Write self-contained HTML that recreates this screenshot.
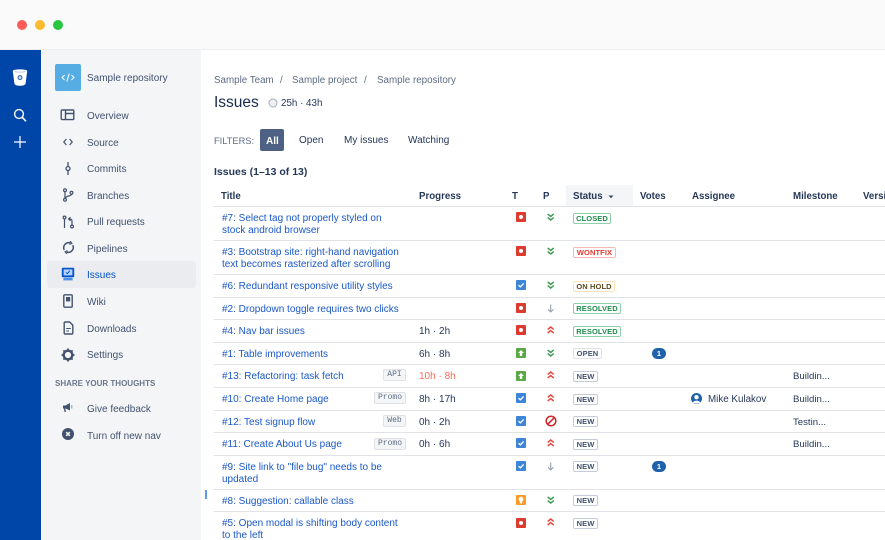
<!DOCTYPE html>
<html><head><meta charset="utf-8">
<style>
html,body{margin:0;padding:0;background:#fff}
#p{position:relative;width:885px;height:540px;overflow:hidden;background:#fff;font-family:"Liberation Sans",sans-serif;font-size:10px;color:#172b4d;filter:blur(.35px)}
#p div,#p svg{position:absolute}
.t{white-space:nowrap;line-height:12px}
.n{color:#42526e;left:87px;font-size:10px}
.h{font-weight:bold;color:#253858;top:191px;font-size:9.7px}
.l{color:#1a58c8;left:222px;font-size:10px}
.r{left:214px;width:671px;height:1px;background:#e0e2e6}
.b{font-size:7.5px;font-weight:bold;height:11px;line-height:9px;box-sizing:border-box;text-align:center;border:1px solid;border-radius:2px;white-space:nowrap;letter-spacing:.1px;left:573px}
.new{color:#42526e;border-color:#c5ccd9;width:25px}
.g{color:#1f8a4d;border-color:#8fcfa8}
.lb{font-family:"Liberation Mono",monospace;font-size:8px;color:#5e6c84;background:#f4f5f7;border:1px solid #dfe1e6;border-radius:2px;height:12px;line-height:10px;box-sizing:border-box;text-align:center;white-space:nowrap}
.s{left:374px;width:32px}
.w{left:383px;width:23px}
.d{color:#253858;font-size:10px}
.m{color:#253858;font-size:9.6px;left:793px}
.v{left:652px;width:14px;height:11px;border-radius:5.5px;background:#1f62ab;color:#fff;font-size:7.5px;font-weight:bold;line-height:11px;text-align:center}
.c{color:#5e6c84;font-size:9.8px;top:75px}
</style></head><body>
<div id="p">
<!-- title bar -->
<div style="left:0;top:0;width:885px;height:49px;background:#fafafa"></div>
<div style="left:0;top:49px;width:885px;height:1px;background:#eeeeee"></div>
<div style="left:17px;top:20px;width:10px;height:10px;border-radius:50%;background:#fc5b57"></div>
<div style="left:35px;top:20px;width:10px;height:10px;border-radius:50%;background:#fdbc2e"></div>
<div style="left:53px;top:20px;width:10px;height:10px;border-radius:50%;background:#26c73f"></div>
<!-- global nav -->
<div style="left:0;top:50px;width:41px;height:490px;background:#0046a8"></div>
<svg style="left:12px;top:68px" width="16" height="19" viewBox="0 0 16 19"><path d="M.8 3C.8 .8 15.2 .8 15.2 3L13.6 15.5C13.3 18.6 2.7 18.6 2.4 15.5Z" fill="#fff"/><path d="M2.6 3.4C5 4.4 11 4.4 13.4 3.4" stroke="#b8cbe8" stroke-width="1" fill="none"/><circle cx="8" cy="9.6" r="1.9" fill="#dfe8f5" stroke="#2e66b5" stroke-width="1.1"/></svg>
<svg style="left:13px;top:108px" width="14" height="14" viewBox="0 0 14 14"><circle cx="6" cy="6" r="4.4" fill="none" stroke="#fff" stroke-width="1.4"/><path d="M9.3 9.4L13 13.2" stroke="#fff" stroke-width="1.6"/></svg>
<svg style="left:14px;top:136px" width="12" height="12" viewBox="0 0 12 12"><path d="M6 0V12M0 6H12" stroke="#fff" stroke-width="1.2"/></svg>
<!-- sidebar -->
<div style="left:41px;top:50px;width:1px;height:490px;background:#fff"></div>
<div style="left:42px;top:50px;width:159px;height:490px;background:#f4f5f7"></div>
<div style="left:47px;top:261px;width:149px;height:27px;background:#ebecf0;border-radius:3px"></div>
<div style="left:55px;top:64px;width:26px;height:27px;background:#56ade4;border-radius:2px"></div>
<svg style="left:61px;top:71px" width="14" height="13" viewBox="0 0 14 13" fill="none" stroke="#fff" stroke-width="1"><path d="M3.6 4L1 6.5L3.6 9M10.4 4L13 6.5L10.4 9M8.2 2.5L5.8 10.5"/></svg>
<div class="t n" style="top:73px">Sample repository</div>
<div class="t n" style="top:111px">Overview</div>
<div class="t n" style="top:138px">Source</div>
<div class="t n" style="top:164px">Commits</div>
<div class="t n" style="top:191px">Branches</div>
<div class="t n" style="top:217px">Pull requests</div>
<div class="t n" style="top:244px">Pipelines</div>
<div class="t n" style="top:270px;color:#0052cc">Issues</div>
<div class="t n" style="top:297px">Wiki</div>
<div class="t n" style="top:324px">Downloads</div>
<div class="t n" style="top:350px">Settings</div>
<div class="t" style="left:55px;top:378px;color:#6b778c;font-size:8px;font-weight:bold">SHARE YOUR THOUGHTS</div>
<div class="t n" style="top:404px">Give feedback</div>
<div class="t n" style="top:431px">Turn off new nav</div>
<!-- sidebar icons -->
<svg style="left:60px;top:108px" width="15" height="14" viewBox="0 0 15 14" fill="none" stroke="#42526e" stroke-width="1.4"><rect x="1.2" y="2" width="12.6" height="9.6" rx="1"/><path d="M5.5 2V11.6M5.5 5.5H13.8"/></svg>
<svg style="left:63px;top:137px" width="10" height="10" viewBox="0 0 10 10" fill="none" stroke="#42526e" stroke-width="1.2"><path d="M3.4 2L.8 5L3.4 8M6.6 2L9.2 5L6.6 8"/></svg>
<svg style="left:64px;top:161px" width="8" height="15" viewBox="0 0 8 15" fill="none" stroke="#42526e" stroke-width="1.3"><circle cx="4" cy="7.5" r="2"/><path d="M4 1V5.5M4 9.5V14"/></svg>
<svg style="left:62px;top:188px" width="12" height="14" viewBox="0 0 12 14" fill="none" stroke="#42526e" stroke-width="1.2"><circle cx="3" cy="2.2" r="1.4"/><circle cx="3" cy="11.8" r="1.4"/><circle cx="9.5" cy="4.8" r="1.4"/><path d="M3 3.6V10.4M9.5 6.2C9.5 8.5 3.5 7.5 3.2 10.4"/></svg>
<svg style="left:62px;top:215px" width="13" height="14" viewBox="0 0 13 14" fill="none" stroke="#42526e" stroke-width="1.2"><circle cx="2.5" cy="2.5" r="1.4"/><path d="M2.5 4V13"/><circle cx="10" cy="11.5" r="1.4"/><path d="M10 10V6C10 4.5 9 4 7 4M8.5 2.2L6.6 4L8.5 5.8"/></svg>
<svg style="left:62px;top:241px" width="13" height="13" viewBox="0 0 13 13" fill="none" stroke="#42526e" stroke-width="1.5"><path d="M2.2 8.8A5 5 0 0 1 8.5 2M10.8 4.2A5 5 0 0 1 4.5 11"/><path d="M8 0L10 2.2L7.5 3.5M5 13L3 10.8L5.5 9.5" stroke-width="1"/></svg>
<svg style="left:61px;top:267px" width="14" height="14" viewBox="0 0 14 14"><rect x=".8" y=".8" width="12.4" height="9.4" rx="1" fill="#0052cc"/><rect x="2.6" y="2.4" width="8.8" height="6" fill="#b8d2f5"/><path d="M5 5.5L6.4 6.6L8.8 3.8" stroke="#0052cc" stroke-width="1" fill="none"/><rect x="2.4" y="10.8" width="9.2" height="2.6" fill="#4c8fe8"/></svg>
<svg style="left:63px;top:294px" width="10" height="14" viewBox="0 0 10 14" fill="none"><rect x=".8" y=".8" width="8.4" height="12.4" rx="1" stroke="#42526e" stroke-width="1.4"/><rect x="3" y="3" width="4.2" height="4.4" fill="#42526e"/></svg>
<svg style="left:63px;top:321px" width="11" height="14" viewBox="0 0 11 14" fill="none" stroke="#42526e" stroke-width="1.4"><path d="M1.2 2C1.2 1.3 1.6 1 2.2 1H6.6L9.8 4.2V12C9.8 12.6 9.4 13 8.8 13H2.2C1.6 13 1.2 12.6 1.2 12Z"/><path d="M3.2 7.5H7.8M3.2 10H6" stroke-width="1"/></svg>
<svg style="left:61px;top:348px" width="14" height="14" viewBox="0 0 14 14"><circle cx="7" cy="7" r="4.3" fill="none" stroke="#42526e" stroke-width="2.4"/><path d="M7 .5V2.5M7 11.5V13.5M.5 7H2.5M11.5 7H13.5M2.4 2.4L3.8 3.8M10.2 10.2L11.6 11.6M11.6 2.4L10.2 3.8M3.8 10.2L2.4 11.6" stroke="#42526e" stroke-width="1.8"/></svg>
<svg style="left:62px;top:402px" width="12" height="11" viewBox="0 0 12 11"><path d="M1 3.5H3.5L8 1V8.5L3.5 6.5H3.2L4 10H2.6L1.8 6.5H1Z" fill="#42526e"/><path d="M9.8 3V6.5" stroke="#8993a4" stroke-width="1"/></svg>
<svg style="left:62px;top:428px" width="12" height="12" viewBox="0 0 12 12"><circle cx="6" cy="6" r="6" fill="#42526e"/><path d="M4.2 4.2L7.8 7.8M7.8 4.2L4.2 7.8" stroke="#f4f5f7" stroke-width="1.5"/></svg>
<div style="left:205px;top:490px;width:2px;height:9px;background:#5a9bee"></div>
<!-- header -->
<div class="t c" style="left:214px">Sample Team</div>
<div class="t c" style="left:280px">/</div>
<div class="t c" style="left:292px">Sample project</div>
<div class="t c" style="left:364px">/</div>
<div class="t c" style="left:377px">Sample repository</div>
<div class="t" style="left:214px;top:94px;font-size:15.5px;line-height:18px;color:#172b4d">Issues</div>
<svg style="left:268px;top:98px" width="10" height="10" viewBox="0 0 10 10"><circle cx="5" cy="5" r="4" fill="#f0f0f0" stroke="#a5adba" stroke-width="1"/></svg>
<div class="t" style="left:281px;top:98px;font-size:9.8px;color:#253858">25h · 43h</div>
<div class="t" style="left:214px;top:135px;color:#5e6c84;font-size:9.3px">FILTERS:</div>
<div style="left:260px;top:129px;width:24px;height:22px;background:#4d6185;border-radius:2px"></div>
<div class="t" style="left:266px;top:136px;color:#fff;font-weight:bold;font-size:10px">All</div>
<div class="t d" style="left:299px;top:135px">Open</div>
<div class="t d" style="left:344px;top:135px">My issues</div>
<div class="t d" style="left:408px;top:135px">Watching</div>
<div class="t" style="left:214px;top:166px;font-weight:bold;font-size:10.5px;color:#253858">Issues (1–13 of 13)</div>
<!-- table header -->
<div style="left:566px;top:185px;width:67px;height:21px;background:#f4f5f7"></div>
<div class="t h" style="left:221px">Title</div>
<div class="t h" style="left:419px">Progress</div>
<div class="t h" style="left:512px">T</div>
<div class="t h" style="left:543px">P</div>
<div class="t h" style="left:573px">Status</div>
<svg style="left:608px;top:195px" width="6" height="4" viewBox="0 0 6 4"><path d="M.5 .5H5.5L3 3.2Z" fill="#344563"/></svg>
<div class="t h" style="left:640px">Votes</div>
<div class="t h" style="left:692px">Assignee</div>
<div class="t h" style="left:793px">Milestone</div>
<div class="t h" style="left:863px">Versi</div>
<div class="r" style="top:206px"></div><div class="r" style="top:240px"></div><div class="r" style="top:274px"></div><div class="r" style="top:297px"></div><div class="r" style="top:319px"></div><div class="r" style="top:342px"></div><div class="r" style="top:364px"></div><div class="r" style="top:387px"></div><div class="r" style="top:410px"></div><div class="r" style="top:432px"></div><div class="r" style="top:455px"></div><div class="r" style="top:489px"></div><div class="r" style="top:511px"></div>
<!-- titles -->
<div class="t l" style="top:213px">#7: Select tag not properly styled on</div>
<div class="t l" style="top:225px">stock android browser</div>
<div class="t l" style="top:247px">#3: Bootstrap site: right-hand navigation</div>
<div class="t l" style="top:259px">text becomes rasterized after scrolling</div>
<div class="t l" style="top:281px">#6: Redundant responsive utility styles</div>
<div class="t l" style="top:304px">#2: Dropdown toggle requires two clicks</div>
<div class="t l" style="top:326px">#4: Nav bar issues</div>
<div class="t l" style="top:349px">#1: Table improvements</div>
<div class="t l" style="top:371px">#13: Refactoring: task fetch</div>
<div class="t l" style="top:394px">#10: Create Home page</div>
<div class="t l" style="top:417px">#12: Test signup flow</div>
<div class="t l" style="top:439px">#11: Create About Us page</div>
<div class="t l" style="top:462px">#9: Site link to "file bug" needs to be</div>
<div class="t l" style="top:474px">updated</div>
<div class="t l" style="top:496px">#8: Suggestion: callable class</div>
<div class="t l" style="top:518px">#5: Open modal is shifting body content</div>
<div class="t l" style="top:530px">to the left</div>
<!-- labels -->
<div class="lb w" style="top:369px">API</div>
<div class="lb s" style="top:392px">Promo</div>
<div class="lb w" style="top:415px">Web</div>
<div class="lb s" style="top:438px">Promo</div>
<!-- progress -->
<div class="t d" style="left:419px;top:326px">1h · 2h</div>
<div class="t d" style="left:419px;top:349px">6h · 8h</div>
<div class="t d" style="left:419px;top:371px;color:#ff6a5c">10h · 8h</div>
<div class="t d" style="left:419px;top:394px">8h · 17h</div>
<div class="t d" style="left:419px;top:417px">0h · 2h</div>
<div class="t d" style="left:419px;top:439px">0h · 6h</div>
<!-- type icons -->
<svg width="0" height="0" style="left:0;top:0"><defs>
<g id="bug"><rect width="10" height="10" rx="1" fill="#dd3b30"/><circle cx="5" cy="5" r="2" fill="#fff"/></g>
<g id="task"><rect width="10" height="10" rx="1" fill="#3d85d8"/><path d="M2.5 5.2L4.4 6.8L7.6 3.4" stroke="#fff" stroke-width="1.3" fill="none"/></g>
<g id="up"><rect width="10" height="10" rx="1" fill="#5aa845"/><path d="M5 2L8 5H6.2V8H3.8V5H2Z" fill="#fff"/></g>
<g id="idea"><rect width="10" height="10" rx="1" fill="#fb9a28"/><circle cx="5" cy="4.2" r="2.4" fill="#fff"/><rect x="3.8" y="6.4" width="2.4" height="2" fill="#fff"/></g>
<g id="low" fill="none" stroke="#3f9a54" stroke-width="1.5"><path d="M.7 1L3.7 3.4L6.7 1M.7 4.6L3.7 7L6.7 4.6"/></g>
<g id="high" fill="none" stroke="#e5483f" stroke-width="1.5"><path d="M.7 7L3.7 4.6L6.7 7M.7 3.4L3.7 1L6.7 3.4"/></g>
<g id="down" fill="none" stroke="#97a0af" stroke-width="1.1"><path d="M3.7 .5V8M1 5.3L3.7 8L6.4 5.3"/></g>
</defs></svg>
<svg style="left:516px;top:212px" width="10" height="10"><use href="#bug"/></svg>
<svg style="left:516px;top:246px" width="10" height="10"><use href="#bug"/></svg>
<svg style="left:516px;top:280px" width="10" height="10"><use href="#task"/></svg>
<svg style="left:516px;top:303px" width="10" height="10"><use href="#bug"/></svg>
<svg style="left:516px;top:325px" width="10" height="10"><use href="#bug"/></svg>
<svg style="left:516px;top:348px" width="10" height="10"><use href="#up"/></svg>
<svg style="left:516px;top:371px" width="10" height="10"><use href="#up"/></svg>
<svg style="left:516px;top:393px" width="10" height="10"><use href="#task"/></svg>
<svg style="left:516px;top:416px" width="10" height="10"><use href="#task"/></svg>
<svg style="left:516px;top:438px" width="10" height="10"><use href="#task"/></svg>
<svg style="left:516px;top:461px" width="10" height="10"><use href="#task"/></svg>
<svg style="left:516px;top:495px" width="10" height="10"><use href="#idea"/></svg>
<svg style="left:516px;top:518px" width="10" height="10"><use href="#bug"/></svg>
<!-- priority -->
<svg style="left:547px;top:213px" width="8" height="9"><use href="#low"/></svg>
<svg style="left:547px;top:247px" width="8" height="9"><use href="#low"/></svg>
<svg style="left:547px;top:281px" width="8" height="9"><use href="#low"/></svg>
<svg style="left:547px;top:304px" width="8" height="9"><use href="#down"/></svg>
<svg style="left:547px;top:326px" width="8" height="9"><use href="#high"/></svg>
<svg style="left:547px;top:349px" width="8" height="9"><use href="#low"/></svg>
<svg style="left:547px;top:371px" width="8" height="9"><use href="#high"/></svg>
<svg style="left:547px;top:394px" width="8" height="9"><use href="#high"/></svg>
<svg style="left:545px;top:415px" width="12" height="12" viewBox="0 0 12 12" fill="none" stroke="#d3232a" stroke-width="1.5"><circle cx="6" cy="6" r="4.8"/><path d="M2.7 9.3L9.3 2.7"/></svg>
<svg style="left:547px;top:439px" width="8" height="9"><use href="#high"/></svg>
<svg style="left:547px;top:462px" width="8" height="9"><use href="#down"/></svg>
<svg style="left:547px;top:496px" width="8" height="9"><use href="#low"/></svg>
<svg style="left:547px;top:518px" width="8" height="9"><use href="#high"/></svg>
<!-- status -->
<div class="b g" style="top:213px;width:38px">CLOSED</div>
<div class="b" style="top:247px;width:43px;color:#de3a33;border-color:#f5b8b3">WONTFIX</div>
<div class="b" style="top:281px;width:42px;color:#5e4a1e;border-color:#fbe3b3">ON HOLD</div>
<div class="b g" style="top:303px;width:48px">RESOLVED</div>
<div class="b g" style="top:326px;width:48px">RESOLVED</div>
<div class="b" style="top:348px;width:29px;color:#42526e;border-color:#dfe1e6">OPEN</div>
<div class="b new" style="top:371px">NEW</div>
<div class="b new" style="top:394px">NEW</div>
<div class="b new" style="top:416px">NEW</div>
<div class="b new" style="top:439px">NEW</div>
<div class="b new" style="top:461px">NEW</div>
<div class="b new" style="top:495px">NEW</div>
<div class="b new" style="top:518px">NEW</div>
<!-- votes -->
<div class="v" style="top:348px">1</div>
<div class="v" style="top:461px">1</div>
<!-- assignee -->
<svg style="left:691px;top:393px" width="11" height="11" viewBox="0 0 11 11"><circle cx="5.5" cy="5.5" r="5.5" fill="#1f62ab"/><circle cx="5.5" cy="4.2" r="2.2" fill="#fff"/><path d="M1.8 9.4C3 7 8 7 9.2 9.4C7.5 11 3.5 11 1.8 9.4Z" fill="#fff"/></svg>
<div class="t d" style="left:708px;top:394px;font-size:9.8px">Mike Kulakov</div>
<!-- milestones -->
<div class="t m" style="top:371px">Buildin...</div>
<div class="t m" style="top:394px">Buildin...</div>
<div class="t m" style="top:417px">Testin...</div>
<div class="t m" style="top:439px">Buildin...</div>
</div>
</body></html>
